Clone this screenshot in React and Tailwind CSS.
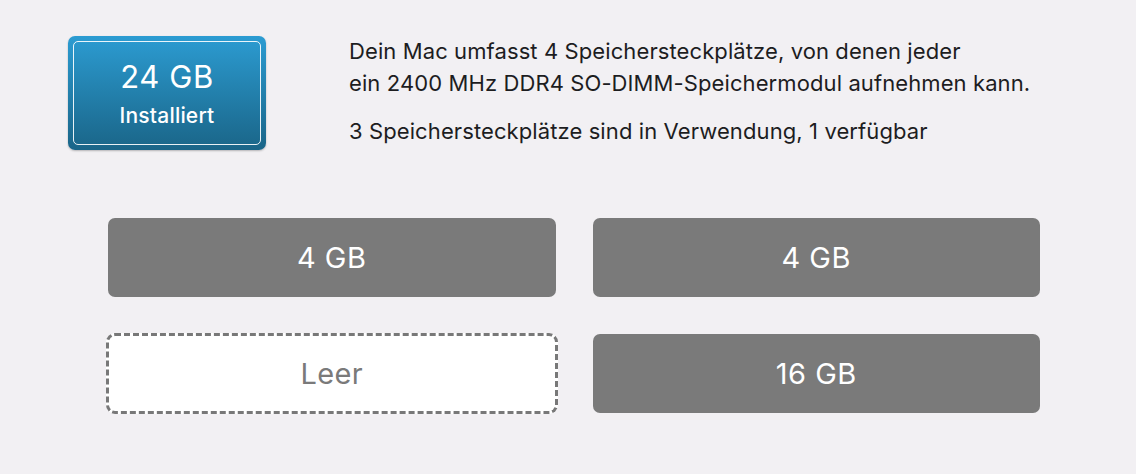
import React from 'react'

const slots = [
  { id: 1, size: '4 GB' },
  { id: 2, size: '4 GB' },
  { id: 3, size: null },
  { id: 4, size: '16 GB' },
]

function Slot({ size }) {
  if (!size) {
    return (
      <div className="h-[81px] -mx-[2px] -my-[1px] rounded-[9px] border-[3px] border-dashed border-[#787878] bg-white flex items-center justify-center">
        <span className="text-[29px] tracking-[0.3px] text-[#7a7a7a]">Leer</span>
      </div>
    )
  }
  return (
    <div className="h-[79px] rounded-[7px] bg-[#7a7a7a] flex items-center justify-center">
      <span className="text-[29px] tracking-[0.5px] text-white">{size}</span>
    </div>
  )
}

export default function App() {
  return (
    <div className="min-h-screen w-full bg-[#f2f0f3] font-['Inter','Liberation_Sans',sans-serif] text-[#1d1d1f]">

      <div className="flex items-start pl-[68px] pt-[36px]">

        {/* installed memory badge */}
        <div className="w-[198px] h-[114px] rounded-[7px] p-[5px] bg-gradient-to-b from-[#2c9cd2] to-[#1a6588] shadow-[0_1px_2px_rgba(0,0,0,0.25)]">
          <div className="h-full rounded-[5px] border-[1.5px] border-white/90 flex flex-col items-center justify-center text-white">
            <span className="text-[31px] leading-[36px] tracking-[0.6px] mt-[2px]">24 GB</span>
            <span className="text-[21px] leading-[26px] mt-[8px] font-medium tracking-[0.2px]">Installiert</span>
          </div>
        </div>

        <div className="ml-[83px] -mt-[1px] text-[22px] leading-[32px] tracking-[0.1px]">
          <p>Dein Mac umfasst 4 Speichersteckplätze, von denen jeder</p>
          <p>ein 2400 MHz DDR4 SO-DIMM-Speichermodul aufnehmen kann.</p>
          <p className="mt-[16px]">3 Speichersteckplätze sind in Verwendung, 1 verfügbar</p>
        </div>

      </div>

      <div className="grid grid-cols-2 gap-x-[37px] gap-y-[37px] ml-[108px] w-[932px] mt-[68px]">
        {slots.map(function(slot) {
          return <Slot key={slot.id} size={slot.size} />
        })}
      </div>

    </div>
  )
}
